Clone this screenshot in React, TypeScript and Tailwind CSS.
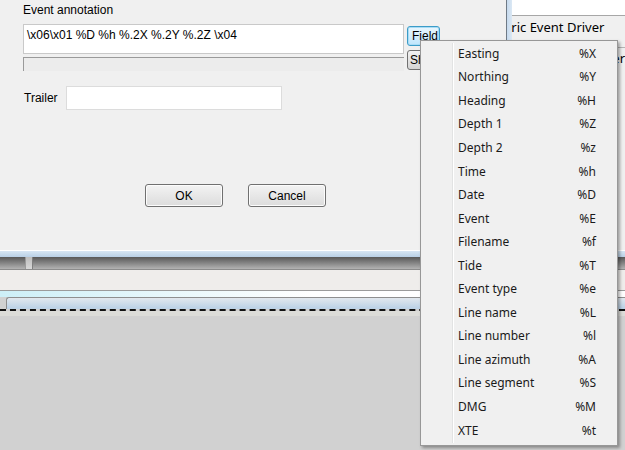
const fields = [
  { label: "Easting", code: "%X" },
  { label: "Northing", code: "%Y" },
  { label: "Heading", code: "%H" },
  { label: "Depth 1", code: "%Z" },
  { label: "Depth 2", code: "%z" },
  { label: "Time", code: "%h" },
  { label: "Date", code: "%D" },
  { label: "Event", code: "%E" },
  { label: "Filename", code: "%f" },
  { label: "Tide", code: "%T" },
  { label: "Event type", code: "%e" },
  { label: "Line name", code: "%L" },
  { label: "Line number", code: "%l" },
  { label: "Line azimuth", code: "%A" },
  { label: "Line segment", code: "%S" },
  { label: "DMG", code: "%M" },
  { label: "XTE", code: "%t" },
]

const dlgFont = { fontFamily: '"Liberation Sans", Arial, sans-serif' }
const menuFont = { fontFamily: '"Noto Sans", "Open Sans", sans-serif' }

export default function App() {
  return (
    <div
      className="relative w-[625px] h-[450px] overflow-hidden bg-[#d1d1d1] flex flex-col text-[#000]"
      style={dlgFont}
    >
      {/* Dialog + window behind */}
      <div className="flex h-[250px]">
        <div className="w-[510px] bg-[#f0f0f0] pl-[23px] pt-[3px] text-[12px] flex flex-col">
          <span className="leading-[15px]">Event annotation</span>
          <div className="flex items-start gap-[3px] mt-[6px]">
            <div className="flex flex-col">
              <div className="w-[381px] h-[30px] bg-white border border-[#c9c9c9] pl-[3px] pt-[3px] leading-[15px]">
                \x06\x01 %D %h %.2X %.2Y %.2Z \x04
              </div>
              <div className="w-[381px] h-[14px] mt-[3px] border-t border-l border-[#9a9a9a] bg-[#ececec]" />
            </div>
            <div className="flex flex-col gap-[4px] mt-[2px]">
              <button className="w-[33px] h-[20px] rounded-[3px] border border-[#3c9cc8] bg-gradient-to-b from-[#eaf6fd] to-[#bee6fd] text-[12px] pl-[4px] text-left leading-[17px] shadow-[inset_0_0_0_1px_#a8dcf5]">
                Field
              </button>
              <button className="w-[33px] h-[20px] rounded-[3px] border border-[#707070] bg-gradient-to-b from-[#f2f2f2] to-[#d4d4d4] text-[12px] pl-[2px] text-left leading-[17px]">
                Sh
              </button>
            </div>
          </div>
          <div className="flex items-center mt-[15px]">
            <span className="w-[43px] pl-px">Trailer</span>
            <div className="w-[216px] h-[24px] bg-white border border-[#dcdcdc]" />
          </div>
          <div className="flex gap-[25px] ml-[122px] mt-[74px]">
            <button className="w-[78px] h-[23px] rounded-[3px] border border-[#707070] bg-gradient-to-b from-[#f3f3f3] to-[#dcdcdc] text-[12px] shadow-[inset_0_0_0_1px_#fcfcfc]">
              OK
            </button>
            <button className="w-[78px] h-[23px] rounded-[3px] border border-[#707070] bg-gradient-to-b from-[#f3f3f3] to-[#dcdcdc] text-[12px] shadow-[inset_0_0_0_1px_#fcfcfc]">
              Cancel
            </button>
          </div>
        </div>
        <div className="w-[6px] border-l border-[#6f7a86] bg-gradient-to-r from-[#c6daee] to-[#dbe8f4]" />
        <div className="flex-1 bg-[#f0f0f0] flex flex-col" style={menuFont}>
          <div className="h-[16px] bg-white border-b border-[#a7a7a7]" />
          <div className="h-[24px] text-[13px] leading-[22px] -ml-px">ric Event Driver</div>
          <div className="h-[8px] border-b border-[#b4b4b4]" />
          <div className="text-[13px] leading-[16px] pl-[100px] pt-[2px]">er</div>
        </div>
      </div>

      {/* Window frames behind the dialog */}
      <div className="h-[7px] border-t border-white bg-gradient-to-b from-[#d7e6f4] to-[#b9d0e6]" />
      <div className="h-[13px] flex bg-gradient-to-b from-[#595959] to-[#b3b3b3] border-b border-[#8c8c8c]">
        <div className="w-[26px] border-r border-[#9a9a9a]" />
        <div className="w-[7px] bg-gradient-to-b from-[#bdbdbd] to-[#d8d8d8] border-r border-[#7e7e7e]" />
      </div>
      <div className="h-[20px] bg-[#efedeb]" />
      <div className="h-px bg-[#9b9b9b]" />
      <div className="h-[6px] bg-gradient-to-r from-[#cdeff7] via-white to-white" />
      <div className="h-[12px] bg-gradient-to-b from-[#e2e8ee] to-[#b9d0e6] border-t border-[#8f8f8f] ml-[6px] rounded-tl-[3px] border-l" />
      <div className="h-[2px] border-t-2 border-dashed border-[#111]" />
      <div className="h-[5px] bg-[#dcdcd8]" />
      <div className="flex-1 bg-[#d1d1d1]" />

      {/* Field popup menu */}
      <div
        className="absolute left-[420px] top-[40px] w-[198px] pt-px pb-[3px] bg-[#f0f0f0] border border-[#979797] shadow-[2px_2px_3px_rgba(0,0,0,0.35)]"
        style={menuFont}
      >
        <div className="absolute left-[31px] top-[2px] bottom-[2px] w-[2px] border-l border-[#e2e3e3] bg-white" />
        {fields.map((f) => (
          <div key={f.code} className="relative flex items-center justify-between h-[23.56px] pl-[37px] pr-[21px] text-[12px] text-[#1a1a1a]">
            <span>{f.label}</span>
            <span>{f.code}</span>
          </div>
        ))}
      </div>
    </div>
  )
}
